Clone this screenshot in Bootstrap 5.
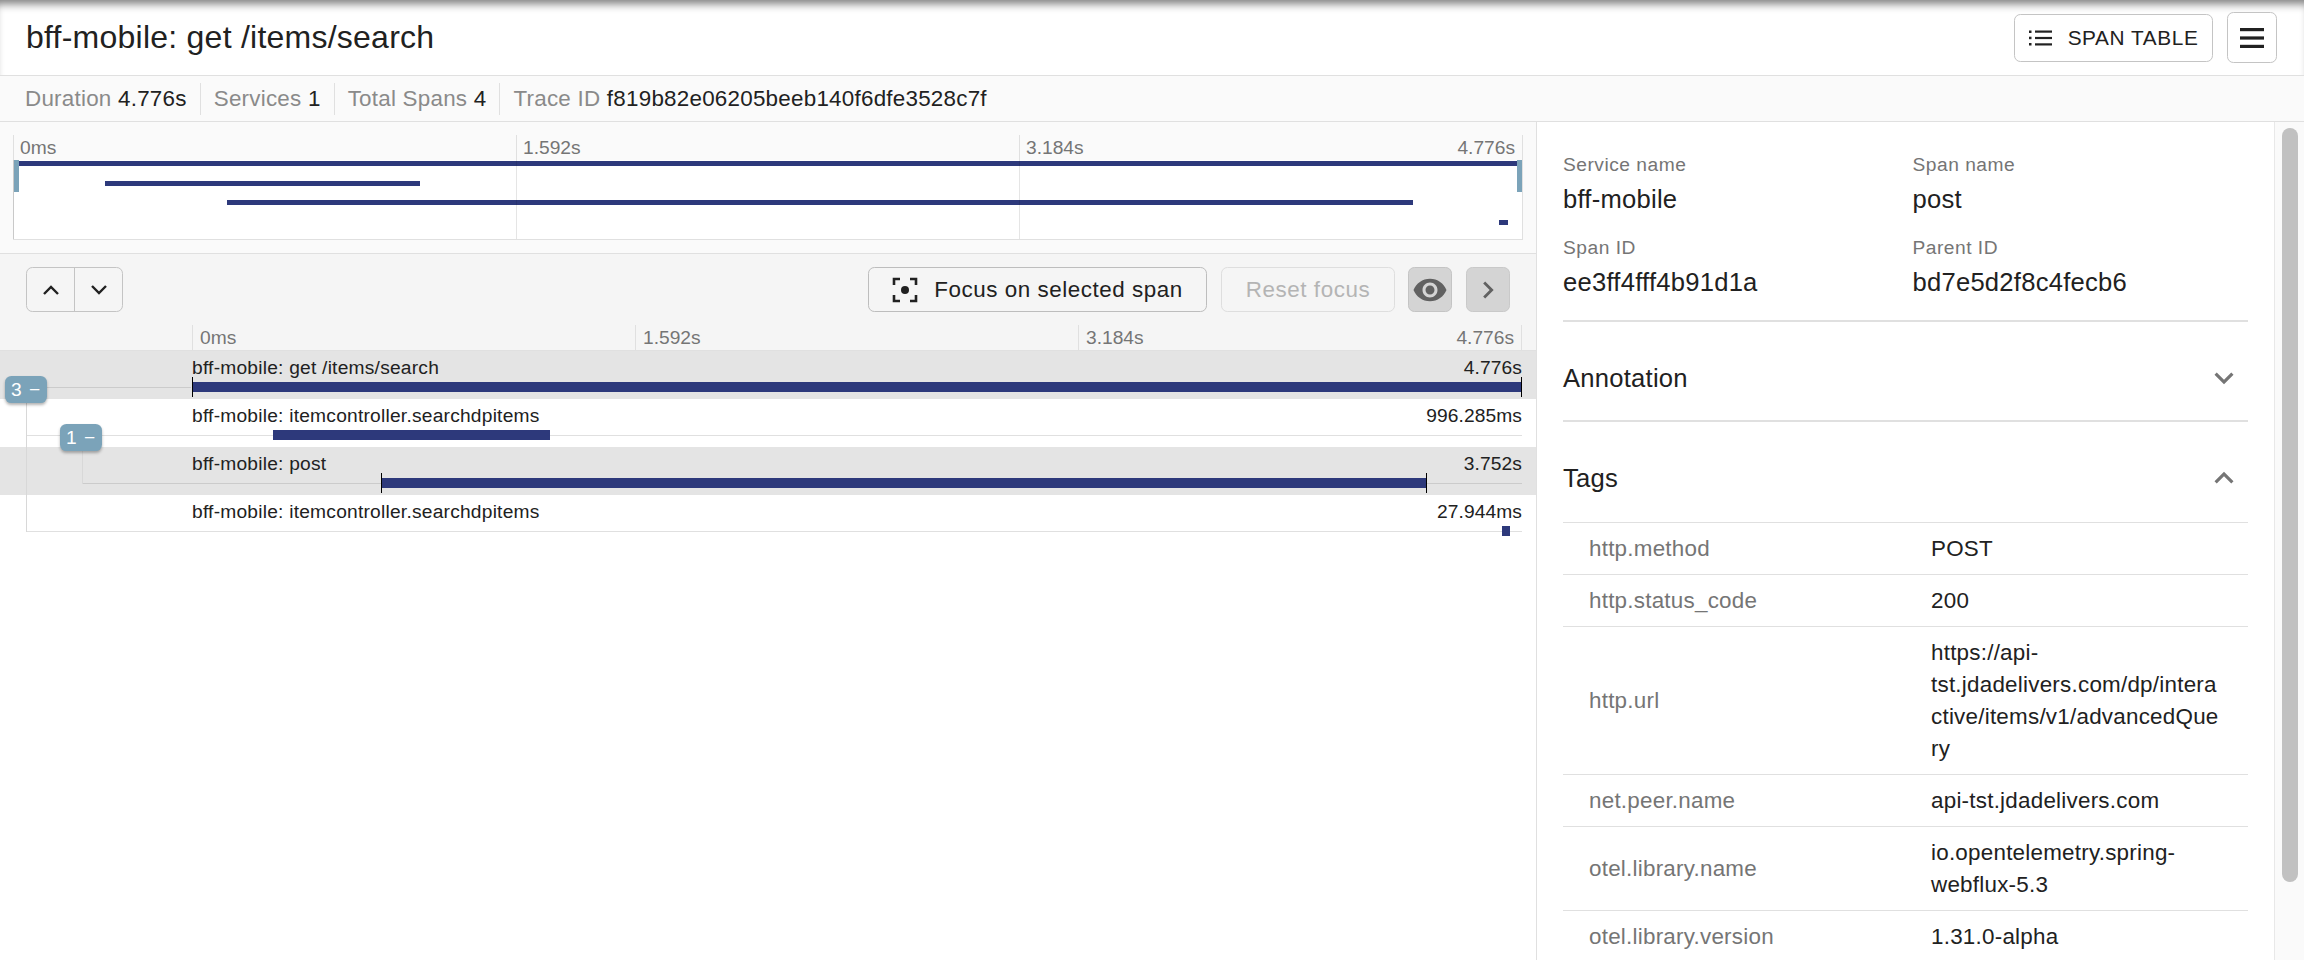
<!DOCTYPE html>
<html lang="en">
<head>
    <meta charset="UTF-8">
    <meta name="viewport" content="width=device-width, initial-scale=1.0">
    <title>bff-mobile: get /items/search</title>
    <link href="https://cdn.jsdelivr.net/npm/bootstrap@5.3.0/dist/css/bootstrap.min.css" rel="stylesheet">
    <style>
        body { font-family: "Liberation Sans", Arial, sans-serif; height: 100vh; overflow: hidden; color: #212121; }
        .app-head { height: 76px; padding: 0 27px 0 26px; border-bottom: 1px solid #e0e0e0; box-shadow: inset 0 9px 8px -5px rgba(0,0,0,.5); }
        .app-title { font-size: 32px; letter-spacing: .24px; font-weight: 400; margin: 0; }
        .out-btn { border: 1px solid #c4c4c4; border-radius: 6.4px; background: #fff; color: #212121; padding: 0; }
        .table-btn { width: 199px; height: 48px; font-size: 20.8px; letter-spacing: .59px; }
        .menu-btn { width: 50px; height: 51px; margin-left: 14px; }
        .info-bar { height: 46px; background: #fafafa; border-bottom: 1px solid #e0e0e0; padding: 7px 0 6px 12px; font-size: 22.4px; letter-spacing: .24px; }
        .info-item { padding: 0 13px; border-right: 1px solid #e0e0e0; line-height: 32px; white-space: nowrap; }
        .info-item:last-child { border-right: 0; }
        .info-key { color: #8a8a8a; }
        .main-area { height: 838px; }
        .left-pane { width: 1537px; flex: none; border-right: 1px solid #e0e0e0; }
        .mini-wrap { height: 132px; background: #fafafa; border-bottom: 1px solid #e0e0e0; padding: 13px 13px 0; }
        .mini-box { position: relative; width: 1510px; height: 105px; border-bottom: 1px solid #e0e0e0; border-right: 1px solid #e0e0e0; }
        .mini-labels { height: 25px; font-size: 19.2px; color: #757575; line-height: 25px; }
        .mini-cell { flex: 1; padding: 0 7px; }
        .mini-bars { height: 79px; background: #fff; padding-top: 1px; border-left: 1px solid #e0e0e0; display: flex; flex-direction: column; gap: 14.5px; }
        .mini-bar { height: 5px; background: #2d397b; flex: none; }
        .mini-tick { position: absolute; top: 0; bottom: 0; width: 1px; background: rgba(0,0,0,.1); }
        .mini-handle { position: absolute; top: 25px; width: 5px; height: 32px; background: #7ba3b9; }
        .tool-wrap { background: #f5f5f5; height: 71px; padding: 13px 26px 13px 26px; }
        .ctl-btn { height: 45px; font-size: 22.4px; letter-spacing: .55px; }
        .updown { width: 97px; height: 45px; border: 1px solid #c4c4c4; border-radius: 6.4px; overflow: hidden; }
        .updown button { flex: 1; border: 0; background: transparent; padding: 0; }
        .updown button + button { border-left: 1px solid #c4c4c4; }
        .focus-btn { width: 339px; background: transparent; margin-left: auto; border-color: #bdbdbd; }
        .reset-btn { width: 174px; background: transparent; color: #b4b4b4; border-color: #dedede; margin-left: 14px; }
        .eye-btn { width: 44px; background: #d4d4d4; margin-left: 13px; }
        .next-btn { width: 44px; background: #d4d4d4; margin-left: 14px; border-color: #c9c9c9; }
        .tick-head { height: 26px; background: #f5f5f5; border-bottom: 1px solid #e0e0e0; padding: 0 14px 0 192px; font-size: 19.2px; color: #757575; line-height: 25px; }
        .tick-cell { flex: 1; padding: 0 7px; border-left: 1px solid #e0e0e0; }
        .tick-cell:last-child { border-right: 1px solid #e0e0e0; }
        .span-list { position: relative; }
        .span-row { position: relative; height: 48px; padding: 4px 14px 0 192px; }
        .span-row.picked { background: #e4e4e4; }
        .span-text { font-size: 19.2px; letter-spacing: .22px; line-height: 26px; color: #212121; }
        .span-time { letter-spacing: .1px; }
        .span-line { position: absolute; height: 1px; right: 14px; background: #e0e0e0; }
        .picked .span-line { background: #cbcbcb; }
        .span-track { position: relative; height: 10px; margin-top: 1px; }
        .span-bar { position: absolute; top: 0; height: 10px; background: #2d397b; }
        .span-edge { position: absolute; top: -5px; height: 20px; width: 1px; background: #000; }
        .tree-v { position: absolute; width: 1px; background: #d8d8d8; }
        .tree-badge { position: absolute; width: 41.5px; height: 27px; background: #7ba3b9; color: #fff; border-radius: 6.4px; font-size: 19.2px; line-height: 27px; box-shadow: 0 2px 3px rgba(0,0,0,.3); padding-left: 6px; letter-spacing: 1px; }
        .right-pane { flex: 1; min-width: 0; overflow: hidden; }
        .detail-body { width: 737px; flex: none; padding: 27px 26px 0; overflow: hidden; }
        .meta-grid { display: grid; grid-template-columns: 349.5px 1fr; row-gap: 13px; padding-bottom: 18px; border-bottom: 2px solid #e0e0e0; }
        .meta-key { font-size: 19.2px; line-height: 32px; letter-spacing: .5px; color: #757575; }
        .meta-val { font-size: 25.6px; line-height: 36px; padding-bottom: 2px; letter-spacing: .24px; color: #212121; }
        .sect-head { height: 88px; margin-top: 12px; font-size: 25.6px; letter-spacing: .24px; padding-right: 5px; }
        .sect-line { border-bottom: 2px solid #e0e0e0; height: 88px; }
        .tag-table { table-layout: fixed; font-size: 22.4px; letter-spacing: .24px; line-height: 32px; border-top: 1px solid #e0e0e0; margin: 0; --bs-table-border-color: #e0e0e0; }
        .tag-table th { width: 368px; font-weight: 400; color: #757575; padding: 9.5px 0 9.5px 26px; }
        .tag-table td { padding: 9.5px 27px 9.5px 0; color: #212121; }
        .fake-scroll { width: 30px; flex: none; background: #fafafa; border-left: 1px solid #e8e8e8; padding: 6px 6px 0 7px; }
        .fake-thumb { height: 754px; background: #c1c1c1; border-radius: 9px; }
    </style>
</head>
<body>
    <header class="app-head d-flex align-items-center">
        <h1 class="app-title">bff-mobile: get /items/search</h1>
        <button class="btn out-btn table-btn ms-auto d-flex align-items-center justify-content-center">
            <svg width="23" height="20" viewBox="0 0 23 20" class="me-3"><g fill="#212121"><rect x="0" y="2.500" width="2.500" height="2.500"/><rect x="0" y="8.700" width="2.500" height="2.500"/><rect x="0" y="15" width="2.500" height="2.500"/><rect x="6" y="2.500" width="17" height="2.200"/><rect x="6" y="8.900" width="17" height="2.200"/><rect x="6" y="15.300" width="17" height="2.200"/></g></svg>
            SPAN TABLE
        </button>
        <button class="btn out-btn menu-btn d-flex align-items-center justify-content-center">
            <svg width="26" height="24" viewBox="0 0 26 24"><g fill="#212121"><rect x="1" y="2" width="24" height="3.200"/><rect x="1" y="10.400" width="24" height="3.200"/><rect x="1" y="18.800" width="24" height="3.200"/></g></svg>
        </button>
    </header>

    <div class="info-bar d-flex">
        <div class="info-item"><span class="info-key">Duration</span> 4.776s</div>
        <div class="info-item"><span class="info-key">Services</span> 1</div>
        <div class="info-item"><span class="info-key">Total Spans</span> 4</div>
        <div class="info-item"><span class="info-key">Trace ID</span> f819b82e06205beeb140f6dfe3528c7f</div>
    </div>

    <div class="main-area d-flex">
        <div class="left-pane">
            <div class="mini-wrap">
                <div class="mini-box">
                    <div class="mini-labels d-flex">
                        <div class="mini-cell">0ms</div>
                        <div class="mini-cell">1.592s</div>
                        <div class="mini-cell d-flex justify-content-between"><span>3.184s</span><span>4.776s</span></div>
                    </div>
                    <div class="mini-bars">
                        <div class="mini-bar" style="margin-left:0;width:100%"></div>
                        <div class="mini-bar" style="margin-left:6.05%;width:20.86%"></div>
                        <div class="mini-bar" style="margin-left:14.1%;width:78.66%"></div>
                        <div class="mini-bar" style="margin-left:98.5%;width:.55%"></div>
                    </div>
                    <div class="mini-tick" style="left:0"></div>
                    <div class="mini-tick" style="left:33.33%"></div>
                    <div class="mini-tick" style="left:66.67%"></div>
                    <div class="mini-handle" style="left:1px"></div>
                    <div class="mini-handle" style="right:0"></div>
                </div>
            </div>

            <div class="tool-wrap d-flex">
                <div class="updown d-flex">
                    <button aria-label="up"><svg width="18" height="12" viewBox="0 0 18 12"><path d="M2 10 9 3l7 7" fill="none" stroke="#212121" stroke-width="2.400"/></svg></button>
                    <button aria-label="down"><svg width="18" height="12" viewBox="0 0 18 12"><path d="M2 2l7 7 7-7" fill="none" stroke="#212121" stroke-width="2.400"/></svg></button>
                </div>
                <button class="btn out-btn ctl-btn focus-btn d-flex align-items-center justify-content-center">
                    <svg width="26" height="26" viewBox="0 0 26 26" class="me-2"><path d="M8 2H2v6M18 2h6v6M8 24H2v-6M18 24h6v-6" fill="none" stroke="#212121" stroke-width="2.600"/><circle cx="13" cy="13" r="4" fill="#212121"/></svg>
                    <span class="ms-2">Focus on selected span</span>
                </button>
                <button class="btn out-btn ctl-btn reset-btn">Reset focus</button>
                <button class="btn out-btn ctl-btn eye-btn d-flex align-items-center justify-content-center" aria-label="show">
                    <svg width="36" height="36" viewBox="0 0 24 24"><path fill="#616161" d="M12 4.500C7 4.500 2.730 7.610 1 12c1.730 4.390 6 7.500 11 7.500s9.270-3.110 11-7.500c-1.730-4.390-6-7.500-11-7.500zM12 17c-2.760 0-5-2.240-5-5s2.240-5 5-5 5 2.240 5 5-2.240 5-5 5zm0-8c-1.660 0-3 1.340-3 3s1.340 3 3 3 3-1.340 3-3-1.340-3-3-3z"/></svg>
                </button>
                <button class="btn out-btn ctl-btn next-btn d-flex align-items-center justify-content-center" aria-label="next">
                    <svg width="34" height="34" viewBox="0 0 24 24"><path fill="#616161" d="M10 6 8.590 7.410 13.170 12l-4.580 4.590L10 18l6-6z"/></svg>
                </button>
            </div>

            <div class="tick-head d-flex">
                <div class="tick-cell">0ms</div>
                <div class="tick-cell">1.592s</div>
                <div class="tick-cell d-flex justify-content-between"><span>3.184s</span><span>4.776s</span></div>
            </div>

            <div class="span-list">
                <div class="span-row picked">
                    <div class="span-line" style="left:46px;right:1345px;top:36px"></div>
                    <div class="span-text d-flex justify-content-between"><span>bff-mobile: get /items/search</span><span class="span-time">4.776s</span></div>
                    <div class="span-track">
                        <div class="span-bar" style="left:0;width:100%"></div>
                        <div class="span-edge" style="left:0"></div>
                        <div class="span-edge" style="left:calc(100% - 1px)"></div>
                    </div>
                </div>
                <div class="span-row">
                    <div class="span-line" style="left:26px;top:36px"></div>
                    <div class="span-text d-flex justify-content-between"><span>bff-mobile: itemcontroller.searchdpitems</span><span class="span-time">996.285ms</span></div>
                    <div class="span-track">
                        <div class="span-bar" style="left:6.09%;width:20.86%"></div>
                    </div>
                </div>
                <div class="span-row picked">
                    <div class="span-line" style="left:82px;top:36px"></div>
                    <div class="span-text d-flex justify-content-between"><span>bff-mobile: post</span><span class="span-time">3.752s</span></div>
                    <div class="span-track">
                        <div class="span-bar" style="left:14.2%;width:78.56%"></div>
                        <div class="span-edge" style="left:14.2%"></div>
                        <div class="span-edge" style="left:92.76%"></div>
                    </div>
                </div>
                <div class="span-row">
                    <div class="span-line" style="left:26px;top:36px"></div>
                    <div class="span-text d-flex justify-content-between"><span>bff-mobile: itemcontroller.searchdpitems</span><span class="span-time">27.944ms</span></div>
                    <div class="span-track">
                        <div class="span-bar" style="left:98.5%;width:.6%"></div>
                    </div>
                </div>
                <div class="tree-v" style="left:26px;top:50px;height:131px"></div>
                <div class="tree-v" style="left:82px;top:100px;height:33px"></div>
                <div class="tree-badge" style="left:5px;top:25px">3 −</div>
                <div class="tree-badge" style="left:60px;top:73px">1 −</div>
            </div>
        </div>

        <div class="right-pane d-flex">
            <div class="detail-body">
                <div class="meta-grid">
                    <div><div class="meta-key">Service name</div><div class="meta-val">bff-mobile</div></div>
                    <div><div class="meta-key">Span name</div><div class="meta-val">post</div></div>
                    <div><div class="meta-key">Span ID</div><div class="meta-val">ee3ff4fff4b91d1a</div></div>
                    <div><div class="meta-key">Parent ID</div><div class="meta-val">bd7e5d2f8c4fecb6</div></div>
                </div>
                <div class="sect-line">
                    <div class="sect-head d-flex align-items-center justify-content-between">Annotation
                        <svg width="38" height="38" viewBox="0 0 24 24"><path fill="#757575" d="M16.590 8.590 12 13.170 7.410 8.590 6 10l6 6 6-6z"/></svg>
                    </div>
                </div>
                <div class="sect-head d-flex align-items-center justify-content-between">Tags
                    <svg width="38" height="38" viewBox="0 0 24 24"><path fill="#757575" d="m12 8-6 6 1.410 1.410L12 10.830l4.590 4.580L18 14z"/></svg>
                </div>
                <table class="table tag-table align-middle">
                    <tbody>
                        <tr><th>http.method</th><td>POST</td></tr>
                        <tr><th>http.status_code</th><td>200</td></tr>
                        <tr><th>http.url</th><td>https://api-<br>tst.jdadelivers.com/dp/intera<br>ctive/items/v1/advancedQue<br>ry</td></tr>
                        <tr><th>net.peer.name</th><td>api-tst.jdadelivers.com</td></tr>
                        <tr><th>otel.library.name</th><td>io.opentelemetry.spring-<br>webflux-5.3</td></tr>
                        <tr><th>otel.library.version</th><td>1.31.0-alpha</td></tr>
                    </tbody>
                </table>
            </div>
            <div class="fake-scroll"><div class="fake-thumb"></div></div>
        </div>
    </div>

    <script src="https://cdn.jsdelivr.net/npm/bootstrap@5.3.0/dist/js/bootstrap.bundle.min.js"></script>
</body>
</html>
